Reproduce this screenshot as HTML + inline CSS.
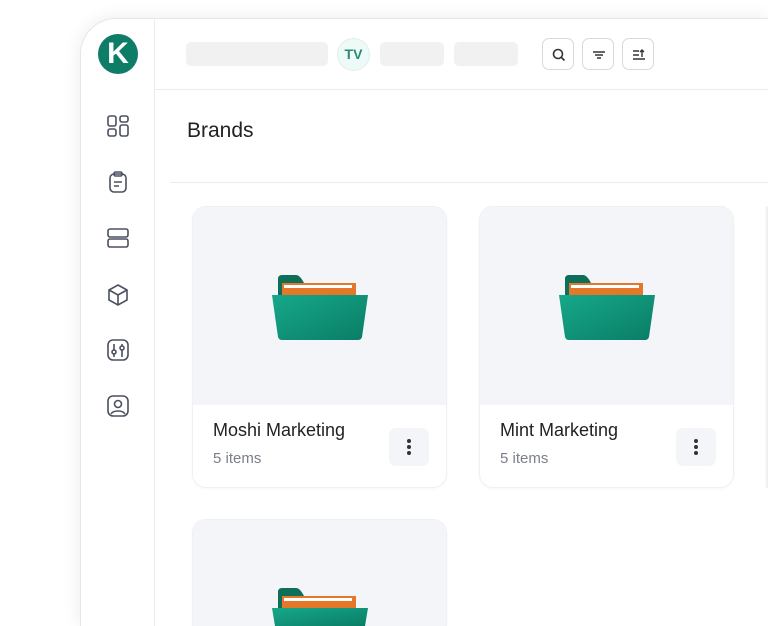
<!DOCTYPE html>
<html style="width:768px;height:626px;overflow:hidden"><head><style>
*{margin:0;padding:0;box-sizing:border-box}
body{width:768px;height:626px;background:#fff;overflow:hidden;position:relative;font-family:"Liberation Sans",sans-serif}
.frame{position:absolute;left:80px;top:18px;width:688px;height:608px;background:#fff;border-radius:36px 0 0 0;border:1px solid #e6e6e8;border-right:0;border-bottom:0;box-shadow:0 0 18px rgba(0,0,0,.08)}
.side{position:absolute;left:80px;top:18px;width:75px;height:608px;border-right:1px solid #ececee}
.logo{position:absolute;left:98px;top:34px;width:40px;height:40px;border-radius:50%;background:#0d7d67;color:#fff;font:bold 30px "Liberation Sans";text-align:center;line-height:40px}
.ic{position:absolute;left:106px}
.hdr{position:absolute;left:155px;top:89px;width:613px;border-top:1px solid #ececee}
.pill{position:absolute;top:42px;height:24px;background:#f1f1f2;border-radius:5px}
.tv{position:absolute;left:337px;top:38px;width:33px;height:33px;border-radius:50%;background:#eefaf7;border:1px solid #e0eeea;color:#2a8a77;font:bold 14px "Liberation Sans";text-align:center;line-height:31px}
.btn{position:absolute;top:38px;width:32px;height:32px;border:1px solid #d8d9de;border-radius:7px;background:#fff}
.btn svg{position:absolute;left:8px;top:8px}
h1{position:absolute;left:187px;top:119px;font:500 21px "Liberation Sans";color:#222}
.div{position:absolute;left:170px;top:182px;width:598px;border-top:1px solid #ececee}
.card{position:absolute;width:255px;height:282px;border:1px solid #f0f0f3;border-radius:14px;background:#fff;overflow:hidden;box-shadow:0 1px 3px rgba(0,0,0,.03)}
.img{height:198px;background:#f4f5f8;position:relative}
.img svg{position:absolute;left:77px;top:66px}
.t{position:absolute;left:20px;top:213px;font:500 18px "Liberation Sans";color:#222}
.s{position:absolute;left:20px;top:243px;font:15px "Liberation Sans";color:#7a7f8a}
.m{position:absolute;left:196px;top:221px;width:40px;height:38px;background:#f4f5f8;border-radius:7px}
.m i{position:absolute;left:18px;width:4px;height:4px;border-radius:50%;background:#333}
</style></head><body>
<div class="frame"></div>
<div class="side"></div>
<div class="logo">K</div>
<svg class="ic" style="top:114px" width="24" height="24" viewBox="0 0 24 24" fill="none" stroke="#4a5060" stroke-width="1.6"><rect x="2" y="2" width="8" height="10" rx="2"/><rect x="14" y="2" width="8" height="6" rx="2"/><rect x="2" y="15" width="8" height="7" rx="2"/><rect x="14" y="11" width="8" height="11" rx="2"/></svg>
<svg class="ic" style="top:170px" width="24" height="24" viewBox="0 0 24 24" fill="none" stroke="#4a5060" stroke-width="1.6"><rect x="4" y="4" width="16" height="18" rx="4"/><rect x="8" y="2" width="8" height="4" rx="1.5"/><path d="M8 12h8M8 16h5"/></svg>
<svg class="ic" style="top:226px" width="24" height="24" viewBox="0 0 24 24" fill="none" stroke="#4a5060" stroke-width="1.6"><rect x="2" y="3" width="20" height="8" rx="2"/><rect x="2" y="13" width="20" height="8" rx="2"/></svg>
<svg class="ic" style="top:283px" width="24" height="24" viewBox="0 0 24 24" fill="none" stroke="#4a5060" stroke-width="1.6"><path d="M12 2l9 5v10l-9 5-9-5V7z"/><path d="M3 7l9 5 9-5M12 12v10"/></svg>
<svg class="ic" style="top:338px" width="24" height="24" viewBox="0 0 24 24" fill="none" stroke="#4a5060" stroke-width="1.6"><rect x="2" y="2" width="20" height="20" rx="5"/><path d="M8 6v6M8 16v3M16 6v2M16 12v7"/><circle cx="8" cy="14" r="2"/><circle cx="16" cy="10" r="2"/></svg>
<svg class="ic" style="top:394px" width="24" height="24" viewBox="0 0 24 24" fill="none" stroke="#4a5060" stroke-width="1.6"><rect x="2" y="2" width="20" height="20" rx="5"/><circle cx="12" cy="10" r="3.5"/><path d="M5 20c2-4 12-4 14 0"/></svg>
<div class="pill" style="left:186px;width:142px"></div>
<div class="tv">TV</div>
<div class="pill" style="left:380px;width:64px"></div>
<div class="pill" style="left:454px;width:64px"></div>
<div class="btn" style="left:542px"><svg width="16" height="16" viewBox="0 0 16 16" fill="none" stroke="#333" stroke-width="1.6"><circle cx="7" cy="7" r="4.5"/><path d="M10.5 10.5l3 3"/></svg></div>
<div class="btn" style="left:582px"><svg width="16" height="16" viewBox="0 0 16 16" fill="none" stroke="#333" stroke-width="1.5"><path d="M2 5h12M4 8h8M6 11h4"/></svg></div>
<div class="btn" style="left:622px"><svg width="16" height="16" viewBox="0 0 16 16" fill="none" stroke="#333" stroke-width="1.4"><path d="M2 4h6M2 8h6M2 12h12M11 10V3M9 5l2-2 2 2"/></svg></div>
<div class="hdr"></div>
<h1>Brands</h1>
<div class="div"></div>
<svg width="0" height="0" style="position:absolute"><defs><linearGradient id="g" x1="0" y1="0" x2="1" y2="1"><stop offset="0" stop-color="#16a88a"/><stop offset="1" stop-color="#0a7d66"/></linearGradient></defs></svg>
<div class="card" style="left:192px;top:206px"><div class="img"><svg width="100" height="68" viewBox="0 0 100 68"><path d="M8 6q0-4 4-4h14q4 0 8 8h26v20H8z" fill="#0d6e5a"/><rect x="12" y="10" width="74" height="18" fill="#e3782a"/><rect x="14" y="12" width="68" height="3" fill="#fff"/><path d="M2 22h96l-6 42q-1 3-4 3H12q-3 0-4-3z" fill="url(#g)"/></svg></div>
<div class="t">Moshi Marketing</div><div class="s">5 items</div><div class="m"><i style="top:11px"></i><i style="top:17px"></i><i style="top:23px"></i></div></div>
<div class="card" style="left:479px;top:206px"><div class="img"><svg width="100" height="68" viewBox="0 0 100 68"><path d="M8 6q0-4 4-4h14q4 0 8 8h26v20H8z" fill="#0d6e5a"/><rect x="12" y="10" width="74" height="18" fill="#e3782a"/><rect x="14" y="12" width="68" height="3" fill="#fff"/><path d="M2 22h96l-6 42q-1 3-4 3H12q-3 0-4-3z" fill="url(#g)"/></svg></div>
<div class="t">Mint Marketing</div><div class="s">5 items</div><div class="m"><i style="top:11px"></i><i style="top:17px"></i><i style="top:23px"></i></div></div>
<div class="card" style="left:766px;top:206px;width:2px"><div class="img"></div></div>
<div class="card" style="left:192px;top:519px;height:107px;border-bottom:0;border-radius:14px 14px 0 0"><div class="img" style="height:107px"><svg width="100" height="40" viewBox="0 0 100 40"><path d="M8 6q0-4 4-4h14q4 0 8 8h26v20H8z" fill="#0d6e5a"/><rect x="12" y="10" width="74" height="18" fill="#e3782a"/><rect x="14" y="12" width="68" height="3" fill="#fff"/><path d="M2 22h96l-3 18H5z" fill="url(#g)"/></svg></div></div>
</body></html>
